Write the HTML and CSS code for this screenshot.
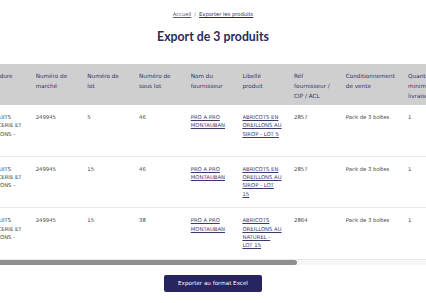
FILE: index.html
```html
<!DOCTYPE html>
<html lang="fr">
<head>
<meta charset="utf-8">
<title>Export de 3 produits</title>
<link rel="stylesheet" href="styles.css">
</head>
<body>
<main class="page">
  <nav class="breadcrumb">
    <a href="#" class="crumb">Accueil</a>
    <span class="sep">/</span>
    <a href="#" class="crumb crumb-current">Exporter les produits</a>
  </nav>
  <h1 class="title">Export de 3 produits</h1>

  <div class="table-scroll">
    <table class="products">
      <colgroup>
        <col class="col-h1"><col class="col-h2"><col class="col-h3">
        <col class="col-std"><col class="col-std"><col class="col-std"><col class="col-std">
        <col class="col-std"><col class="col-std"><col class="col-std">
        <col class="col-wide"><col class="col-std">
        <col class="col-r1"><col class="col-r2"><col class="col-r3">
      </colgroup>
      <thead>
        <tr>
          <th>Code produit</th>
          <th>Titulaire</th>
          <th>Marché</th>
          <th>Procédure</th>
          <th>Numéro de marché</th>
          <th>Numéro de lot</th>
          <th>Numéro de sous lot</th>
          <th>Nom du fournisseur</th>
          <th>Libellé produit</th>
          <th>Réf fournisseur / CIP / ACL</th>
          <th>Conditionnement de vente</th>
          <th>Quantité minimum livraison</th>
          <th>Prix unitaire HT</th>
          <th>Taux de TVA</th>
          <th>Unité</th>
        </tr>
      </thead>
      <tbody>
        <tr>
          <td>10452</td>
          <td>RESAH</td>
          <td>2021-042</td>
          <td>PRODUITS D'EPICERIE ET BOISSONS - LOT 3</td>
          <td>249945</td>
          <td>5</td>
          <td>46</td>
          <td><a href="#" class="cell-link">PRO A PRO MONTAUBAN</a></td>
          <td><a href="#" class="cell-link">ABRICOTS EN OREILLONS AU SIROP - LOT 5</a></td>
          <td>2857</td>
          <td>Pack de 3 boîtes</td>
          <td>1</td>
          <td>12,40</td>
          <td>5,5 %</td>
          <td>Pack</td>
        </tr>
        <tr>
          <td>10453</td>
          <td>RESAH</td>
          <td>2021-042</td>
          <td>PRODUITS D'EPICERIE ET BOISSONS - LOT 3</td>
          <td>249945</td>
          <td>15</td>
          <td>46</td>
          <td><a href="#" class="cell-link">PRO A PRO MONTAUBAN</a></td>
          <td><a href="#" class="cell-link">ABRICOTS EN OREILLONS AU SIROP - LOT 15</a></td>
          <td>2857</td>
          <td>Pack de 3 boîtes</td>
          <td>1</td>
          <td>12,40</td>
          <td>5,5 %</td>
          <td>Pack</td>
        </tr>
        <tr>
          <td>10454</td>
          <td>RESAH</td>
          <td>2021-042</td>
          <td>PRODUITS D'EPICERIE ET BOISSONS - LOT 3</td>
          <td>249945</td>
          <td>15</td>
          <td>38</td>
          <td><a href="#" class="cell-link">PRO A PRO MONTAUBAN</a></td>
          <td><a href="#" class="cell-link">ABRICOTS OREILLONS AU NATUREL - LOT 15</a></td>
          <td>2864</td>
          <td>Pack de 3 boîtes</td>
          <td>1</td>
          <td>11,90</td>
          <td>5,5 %</td>
          <td>Pack</td>
        </tr>
      </tbody>
    </table>
  </div>
  <div class="scroll-track" aria-hidden="true">
    <div class="scroll-thumb" style="width: 69.7%"></div>
  </div>

  <div class="actions">
    <button type="button" class="btn-primary">Exporter au format Excel</button>
  </div>
</main>
</body>
</html>
```

FILE: styles.css
```css
* { box-sizing: border-box; }

html, body {
  margin: 0;
  background: #ffffff;
}

body {
  font-family: "DejaVu Sans", Verdana, sans-serif;
  color: #444444;
}

.page {
  padding-top: 10px;
}

.breadcrumb {
  display: flex;
  justify-content: center;
  align-items: baseline;
  gap: 3px;
  font-size: 5.2px;
  line-height: 8px;
}

.crumb {
  color: #55547a;
  text-decoration: underline;
}

.crumb-current {
  color: #2a295e;
}

.sep {
  color: #808080;
}

.title {
  margin: 11px 0 0;
  text-align: center;
  font-family: Lato, "DejaVu Sans", sans-serif;
  font-weight: 700;
  font-size: 12.3px;
  line-height: 15px;
  color: #2b2a5e;
}

.table-scroll {
  margin-top: 20px;
  display: flex;
  justify-content: center;
  overflow-x: auto;
  overflow-y: hidden;
  scrollbar-width: none;
}

.scroll-track {
  height: 5px;
  background: #f6f6f6;
}

.scroll-thumb {
  height: 100%;
  background: #8f8f8f;
  border-radius: 0 3px 3px 0;
}

.products {
  flex-shrink: 0;
  width: 796px;
  table-layout: fixed;
  border-collapse: collapse;
}

.col-h1, .col-h2 { width: 54.3px; }
.col-h3 { width: 54.4px; }
.col-std { width: 51.7px; }
.col-wide { width: 62.3px; }
.col-r1, .col-r2 { width: 52.4px; }
.col-r3 { width: 52.3px; }

.products th {
  background: #cfcfcf;
  color: #32316a;
  font-weight: normal;
  font-size: 5.7px;
  line-height: 10px;
  text-align: left;
  vertical-align: top;
  padding: 7px 6px 4px;
}

.products td {
  font-size: 5.3px;
  line-height: 8.4px;
  color: #444444;
  text-align: left;
  vertical-align: top;
  padding: 8px 6px 9px;
  border-bottom: 1px solid #e9e9e9;
}

.cell-link {
  color: #3a396c;
  text-decoration: underline;
}

.actions {
  display: flex;
  justify-content: center;
  padding-top: 10.5px;
}

.btn-primary {
  font-family: "DejaVu Sans", Verdana, sans-serif;
  font-size: 5.6px;
  line-height: 9px;
  padding: 4px 14px;
  border: 0;
  border-radius: 2px;
  background: #262560;
  color: #ffffff;
}
```
